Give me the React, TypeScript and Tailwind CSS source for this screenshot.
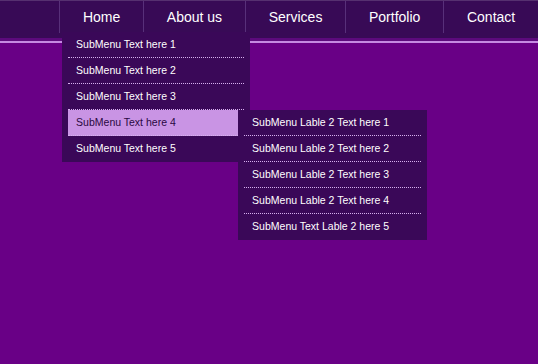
const navItems = ['Home', 'About us', 'Services', 'Portfolio', 'Contact'];

const subOne = [
  'SubMenu Text here 1',
  'SubMenu Text here 2',
  'SubMenu Text here 3',
  'SubMenu Text here 4',
  'SubMenu Text here 5',
];

const subTwo = [
  'SubMenu Lable 2 Text here 1',
  'SubMenu Lable 2 Text here 2',
  'SubMenu Lable 2 Text here 3',
  'SubMenu Lable 2 Text here 4',
  'SubMenu Text Lable 2 here 5',
];

function SubItem({ label, last, active }: { label: string; last?: boolean; active?: boolean }) {
  return (
    <div
      className={`flex items-center pl-2 text-[10.5px] ${
        active ? 'bg-[#c994e4] text-[#2a0842]' : 'text-white'
      } ${last ? 'h-[25px]' : 'h-[26px] border-b border-dotted border-[#d6b0ee]'}`}
    >
      {label}
    </div>
  );
}

function SecondMenu() {
  return (
    <div className="absolute left-[170px] top-0 w-[189px] bg-[#3a0858] px-[6px] pb-[1px] z-20">
      {subTwo.map((s, i) => (
        <SubItem key={s} label={s} last={i === subTwo.length - 1} />
      ))}
    </div>
  );
}

function FirstMenu() {
  return (
    <div className="absolute left-[2px] top-[31px] w-[188px] bg-[#3a0858] px-[6px] pb-[1px] z-10">
      {subOne.map((s, i) => (
        <div key={s} className="relative">
          <SubItem label={s} last={i === subOne.length - 1} active={i === 3} />
          {i === 3 && <SecondMenu />}
        </div>
      ))}
    </div>
  );
}

export default function App() {
  return (
    <div
      className="w-full h-[364px] bg-[#690086] overflow-hidden"
      style={{ fontFamily: '"Liberation Sans", Arial, sans-serif' }}
    >
      {/* top nav */}
      <div className="h-[38px] bg-[#380a56] border-t border-[#563070] flex justify-end">
        {navItems.map((n, i) => (
          <div
            key={n}
            className="relative h-[32px] flex items-center pt-[1px] px-[22.8px] border-l border-[#58307a] text-white text-[14px]"
          >
            {n}
            {i === 0 && <FirstMenu />}
          </div>
        ))}
      </div>
      <div className="h-[3px] bg-[#5c0a7c]" />
      <div className="h-[2px] bg-[#c58ae2]" />
    </div>
  );
}
